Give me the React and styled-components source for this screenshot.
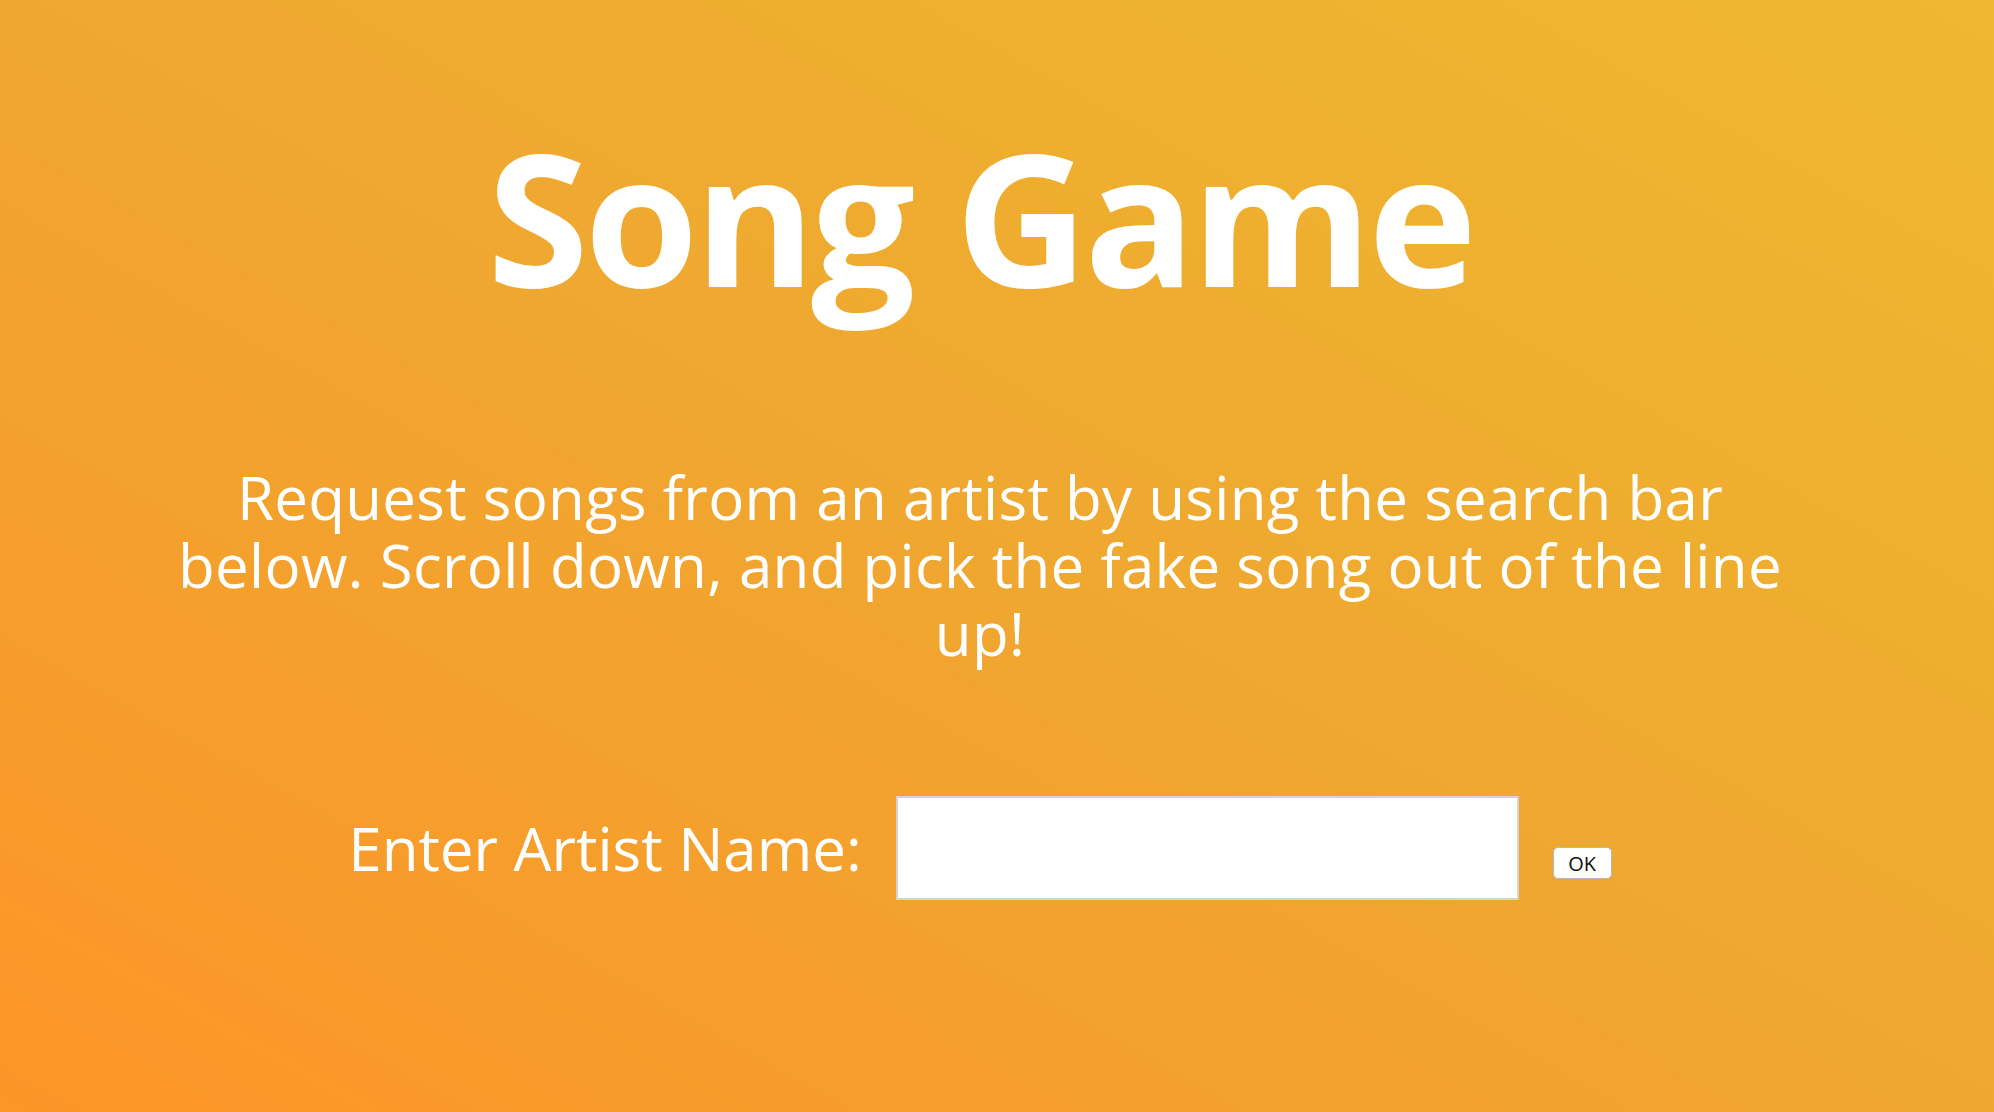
import React from 'react'
import styled, { createGlobalStyle } from 'styled-components'

const GlobalStyle = createGlobalStyle`
html, body {
  margin: 0;
  padding: 0;
  height: 100%;
}
body {
  font-family: "Open Sans", "DejaVu Sans", sans-serif;
  color: white;
}
`

// full-screen orange gradient
const Page = styled.div`
min-height: 1112px;
box-sizing: border-box;
padding: 124px 34px 0 0;
background: linear-gradient(to top right, #fd9527 0%, #efa730 50%, #efb830 100%);
display: flex;
flex-direction: column;
align-items: center;
`

const Title = styled.h1`
margin: 0;
font-size: 184px;
line-height: 1;
font-weight: 700;
letter-spacing: -4px;
`

const Intro = styled.p`
margin: 155px 0 0;
max-width: 1640px;
text-align: center;
font-size: 60px;
line-height: 68px;
font-weight: 400;
letter-spacing: 0.3px;
`

const SearchRow = styled.form`
margin-top: 129px;
display: flex;
align-items: center;
gap: 34px;
`

const Label = styled.label`
font-size: 60px;
line-height: 68px;
`

const ArtistInput = styled.input`
width: 623px;
height: 104px;
box-sizing: border-box;
border: 2px solid #d3d3d3;
background: white;
font-size: 40px;
padding: 0 12px;
outline: none;
`

const OkButton = styled.button`
margin-top: 30px;
width: 59px;
height: 32px;
box-sizing: border-box;
background: white;
border: 1px solid #b8b8b8;
border-radius: 5px;
font-family: "Open Sans", sans-serif;
font-size: 20px;
color: #111;
padding: 0;
cursor: pointer;
`

const App = () => {
  return (
    <Page>
      <GlobalStyle />
      <Title>Song Game</Title>
      <Intro>
        Request songs from an artist by using the search bar below. Scroll down, and pick the fake song out of the line up!
      </Intro>
      <SearchRow onSubmit={e => e.preventDefault()}>
        <Label htmlFor="artist">Enter Artist Name:</Label>
        <ArtistInput id="artist" type="text" />
        <OkButton type="submit">OK</OkButton>
      </SearchRow>
    </Page>
  )
}

export default App
